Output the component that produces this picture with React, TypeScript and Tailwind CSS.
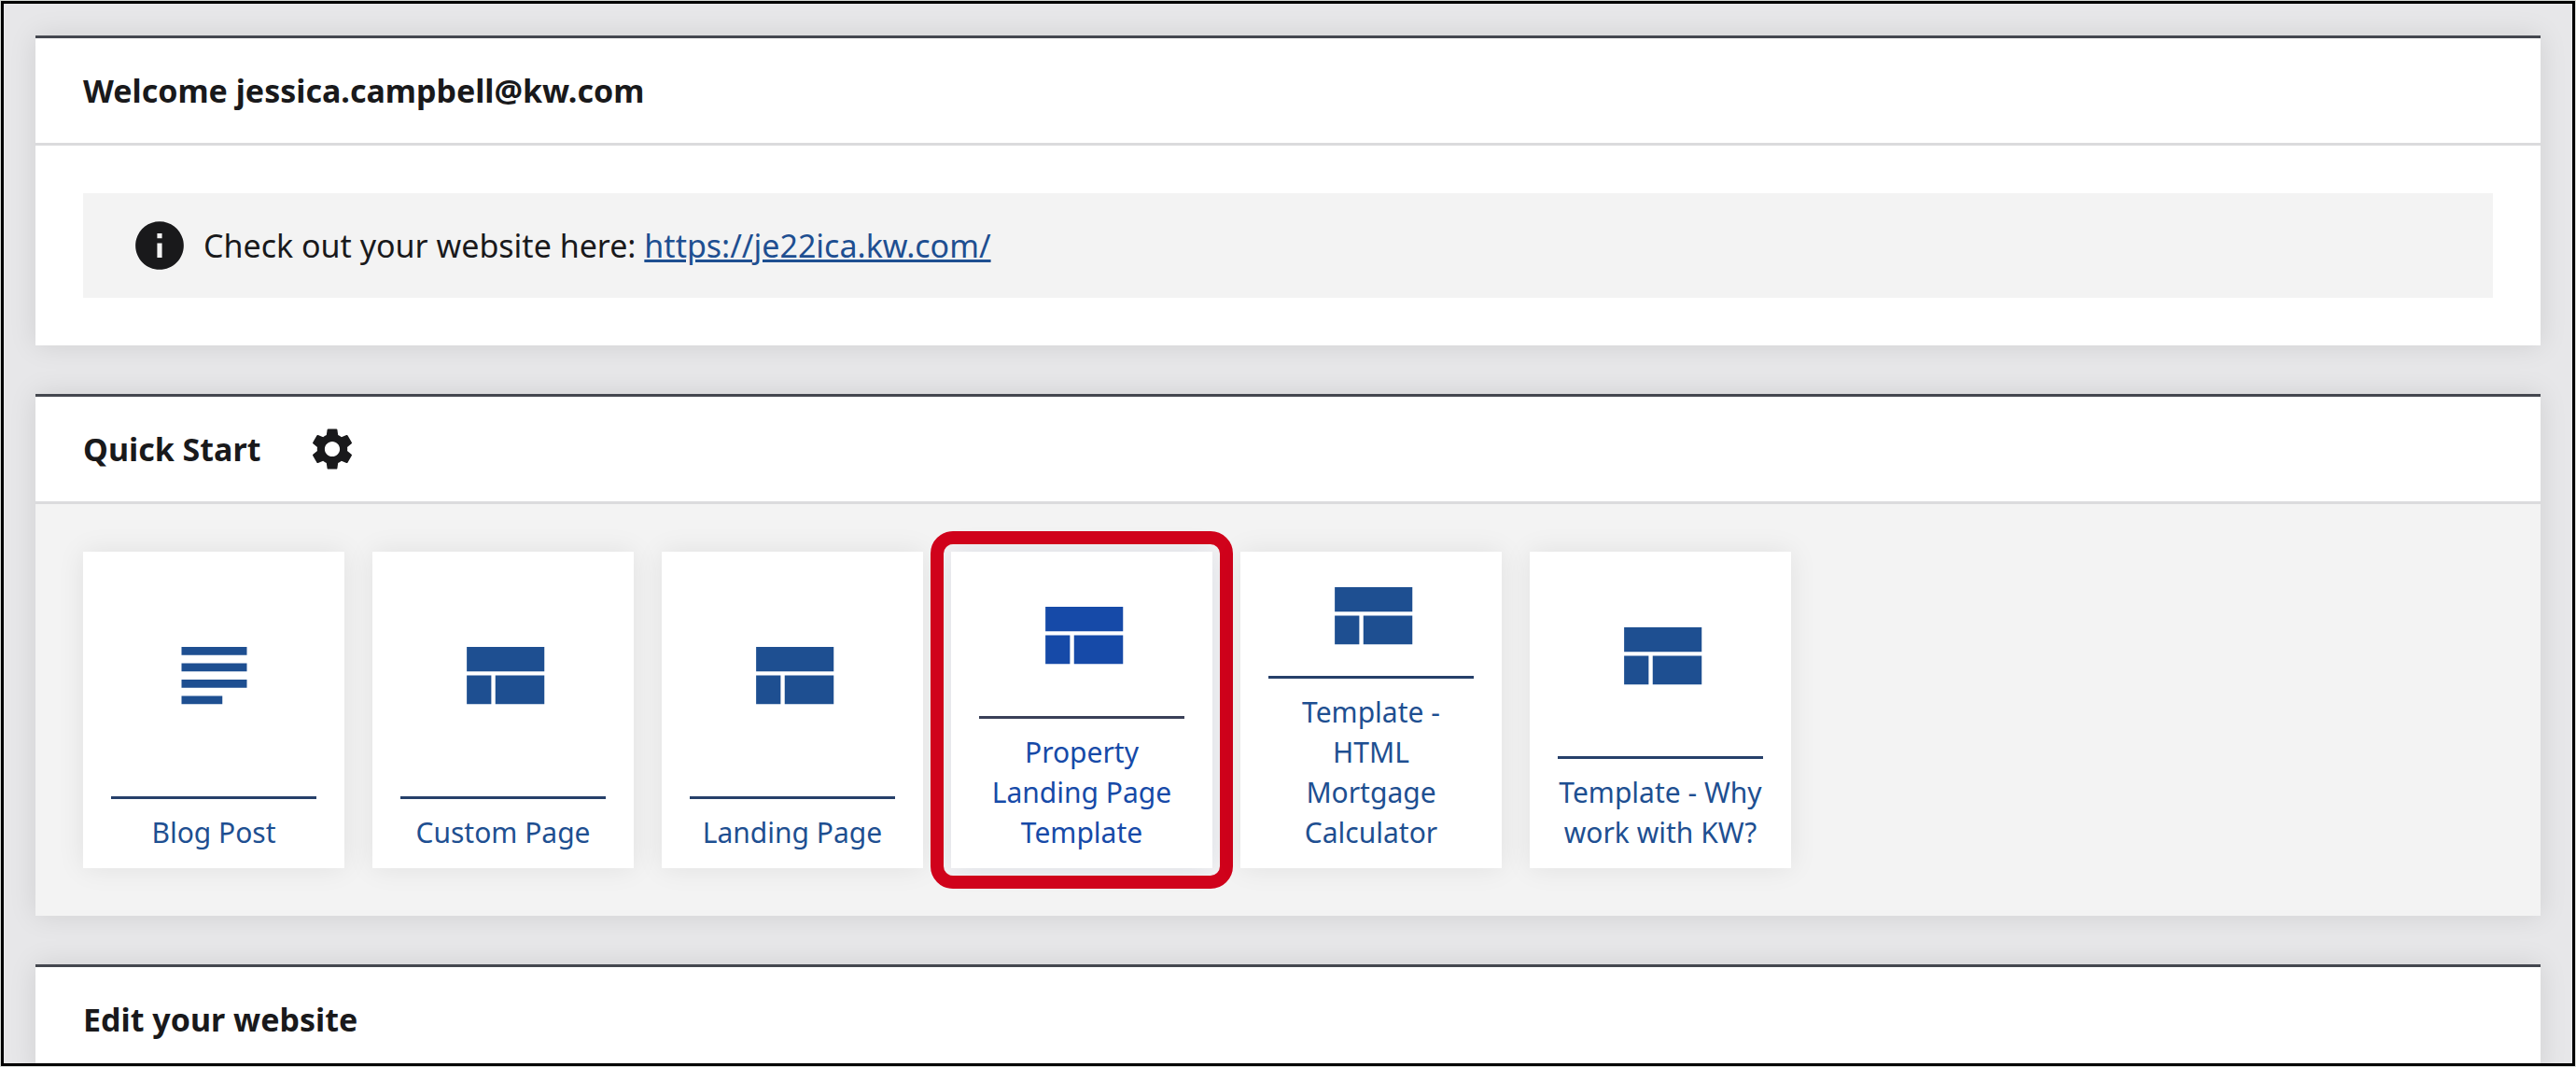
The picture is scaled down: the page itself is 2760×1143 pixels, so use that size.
import type { ReactNode } from "react"
import { MdInfo, MdSettings } from "react-icons/md"
import clsx from "clsx"

type TileIcon = "article" | "layout"

interface Tile {
  label: string
  icon: TileIcon
  highlighted?: boolean
}

const tiles: Tile[] = [
  { label: "Blog Post", icon: "article" },
  { label: "Custom Page", icon: "layout" },
  { label: "Landing Page", icon: "layout" },
  { label: "Property Landing Page Template", icon: "layout", highlighted: true },
  { label: "Template - HTML Mortgage Calculator", icon: "layout" },
  { label: "Template - Why work with KW?", icon: "layout" },
]

const iconPaths: Record<TileIcon, string> = {
  article: "M4 5h16v2H4zM4 9h16v2H4zM4 13h16v2H4zM4 17h10v2H4z",
  layout: "M3 5h19v6H3zM3 12h6v7H3zM10 12h12v7H10z",
}

function Panel({ title, action, children }: { title: string; action?: ReactNode; children?: ReactNode }) {
  return (
    <section className="border-t-[3px] border-[#44474f] bg-white shadow-[0_0_28px_rgba(0,0,0,0.1)]">
      <header className="flex h-[115px] items-center gap-[50px] border-b-[3px] border-[#dbdbdd] px-[51px]">
        <h2 className="text-[34px] leading-[48px] font-bold">{title}</h2>
        {action}
      </header>
      {children}
    </section>
  )
}

function QuickStartTile({ label, icon, highlighted }: Tile) {
  return (
    <a
      href="#"
      className={clsx(
        "relative flex h-[339px] w-[280px] flex-col bg-white px-[30px]",
        highlighted
          ? "text-[#164aa8] shadow-[0_0_28px_rgba(0,30,120,0.1)]"
          : "text-[#1e4f91] shadow-[0_0_28px_rgba(0,0,0,0.08)]",
      )}
    >
      <span className="flex flex-1 items-center justify-center pt-[3px]">
        <svg viewBox="0 0 24 24" className="size-[105px]" fill="currentColor" aria-hidden="true">
          <path d={iconPaths[icon]} />
        </svg>
      </span>
      <span
        className={clsx(
          "border-t-[3px] pt-[14px] pb-[17px] text-center text-[30px] leading-[43px]",
          highlighted ? "border-[#3a4058]" : "border-[#26406a]",
        )}
      >
        {label}
      </span>
      {highlighted && (
        <span className="pointer-events-none absolute -inset-[22px] rounded-[24px] border-[14px] border-[#d0021b]" />
      )}
    </a>
  )
}

export default function App() {
  return (
    <div className="h-screen bg-[#d5d9d5] p-px font-['Noto_Sans',sans-serif] text-[#19191b]">
      <main className="flex h-full flex-col gap-[52px] overflow-hidden border-[3px] border-black bg-[#e7e7e9] px-[34px] pt-[34px]">
        <Panel title="Welcome jessica.campbell@kw.com">
          <div className="p-[51px]">
            <div className="flex h-[112px] items-center gap-[16px] bg-[#f3f3f3] pl-[51px]">
              <MdInfo className="size-[62px]" />
              <p className="text-[34px] leading-[48px]">
                Check out your website here:{" "}
                <a href="https://je22ica.kw.com/" className="text-[#1e4f91] underline">
                  https://je22ica.kw.com/
                </a>
              </p>
            </div>
          </div>
        </Panel>

        <Panel
          title="Quick Start"
          action={
            <button type="button" aria-label="Quick Start settings">
              <MdSettings className="size-[54px]" />
            </button>
          }
        >
          <div className="flex flex-wrap gap-[30px] bg-[#f3f3f3] p-[51px]">
            {tiles.map((tile) => (
              <QuickStartTile key={tile.label} {...tile} />
            ))}
          </div>
        </Panel>

        <Panel title="Edit your website" />
      </main>
    </div>
  )
}
